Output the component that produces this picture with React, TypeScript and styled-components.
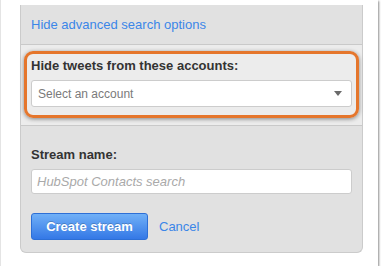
import styled, { createGlobalStyle } from 'styled-components'

const Global = createGlobalStyle`
    body {
        margin: 0;
        background: #ffffff;
        font-family: "Liberation Sans", Arial, sans-serif;
    }
`

const Frame = styled.div`
    width: 378px;
    height: 266px;
    box-sizing: border-box;
    background: #ffffff;
    border-left: 1px solid #e4e4e4;
    box-shadow: 1px 1px 2px rgba(0, 0, 0, 0.45);
    padding: 5px 0 0 19px;
`

const Panel = styled.div`
    width: 343px;
    height: 248px;
    box-sizing: border-box;
    background: #e1e1e1;
    border: 1px solid #cbcbcb;
    border-top: none;
    border-radius: 0 0 6px 6px;
    display: flex;
    flex-direction: column;
`

const Header = styled.div`
    height: 39px;
    padding-left: 10px;
    display: flex;
    align-items: center;
    border-bottom: 1px solid #c9c9c9;
`

const Link = styled.a<{ $gap?: number }>`
    color: #3b86e8;
    font-size: 13px;
    text-decoration: none;
    margin-left: ${p => p.$gap || 0}px;
`

const Highlighted = styled.div`
    background: #ececec;
    border-bottom: 1px solid #c9c9c9;
    padding: 6px 3px 7px 3px;
`

const OrangeBox = styled.div`
    border: 3px solid #e5762c;
    border-radius: 9px;
    box-shadow: 0 1px 4px rgba(0, 0, 0, 0.45);
    padding: 4px 4px 8px 4px;
    display: flex;
    flex-direction: column;
    gap: 6px;
`

const Label = styled.label`
    font-size: 13px;
    font-weight: bold;
    color: #333333;
    line-height: 16px;
`

const Select = styled.div`
    height: 27px;
    box-sizing: border-box;
    background: #ffffff;
    border: 1px solid #cccccc;
    border-radius: 3px;
    display: flex;
    align-items: center;
    justify-content: space-between;
    padding: 0 9px 0 6px;
    color: #7a7a7a;
    font-size: 12px;
`

const Caret = styled.span`
    width: 0;
    height: 0;
    border-left: 4.5px solid transparent;
    border-right: 4.5px solid transparent;
    border-top: 5px solid #6a6a6a;
`

const Body = styled.div`
    flex: 1;
    padding: 21px 10px 0 10px;
    display: flex;
    flex-direction: column;
    gap: 6px;
`

const Input = styled.input`
    height: 25px;
    box-sizing: border-box;
    border: 1px solid #cccccc;
    border-radius: 3px;
    background: #ffffff;
    padding: 0 5px;
    font-family: "Liberation Sans", Arial, sans-serif;
    font-size: 13px;
    outline: none;

    &::placeholder {
        color: #a9a9a9;
        font-style: italic;
    }
`

const Actions = styled.div`
    margin-top: 13px;
    display: flex;
    align-items: center;
`

const Button = styled.button`
    width: 117px;
    height: 27px;
    border: 1px solid #2d6fd6;
    border-radius: 3px;
    background: linear-gradient(#70b0f7, #3478e6);
    color: #ffffff;
    font-family: "Liberation Sans", Arial, sans-serif;
    font-size: 13px;
    font-weight: bold;
    text-shadow: 0 -1px 0 rgba(0, 0, 0, 0.2);
    padding: 0;
`

export default function App() {
    return (
        <>
            <Global />
            <Frame>
                <Panel>
                    <Header>
                        <Link>Hide advanced search options</Link>
                    </Header>
                    <Highlighted>
                        <OrangeBox>
                            <Label>Hide tweets from these accounts:</Label>
                            <Select>
                                Select an account
                                <Caret />
                            </Select>
                        </OrangeBox>
                    </Highlighted>
                    <Body>
                        <Label>Stream name:</Label>
                        <Input placeholder="HubSpot Contacts search" />
                        <Actions>
                            <Button>Create stream</Button>
                            <Link $gap={11}>Cancel</Link>
                        </Actions>
                    </Body>
                </Panel>
            </Frame>
        </>
    )
}
